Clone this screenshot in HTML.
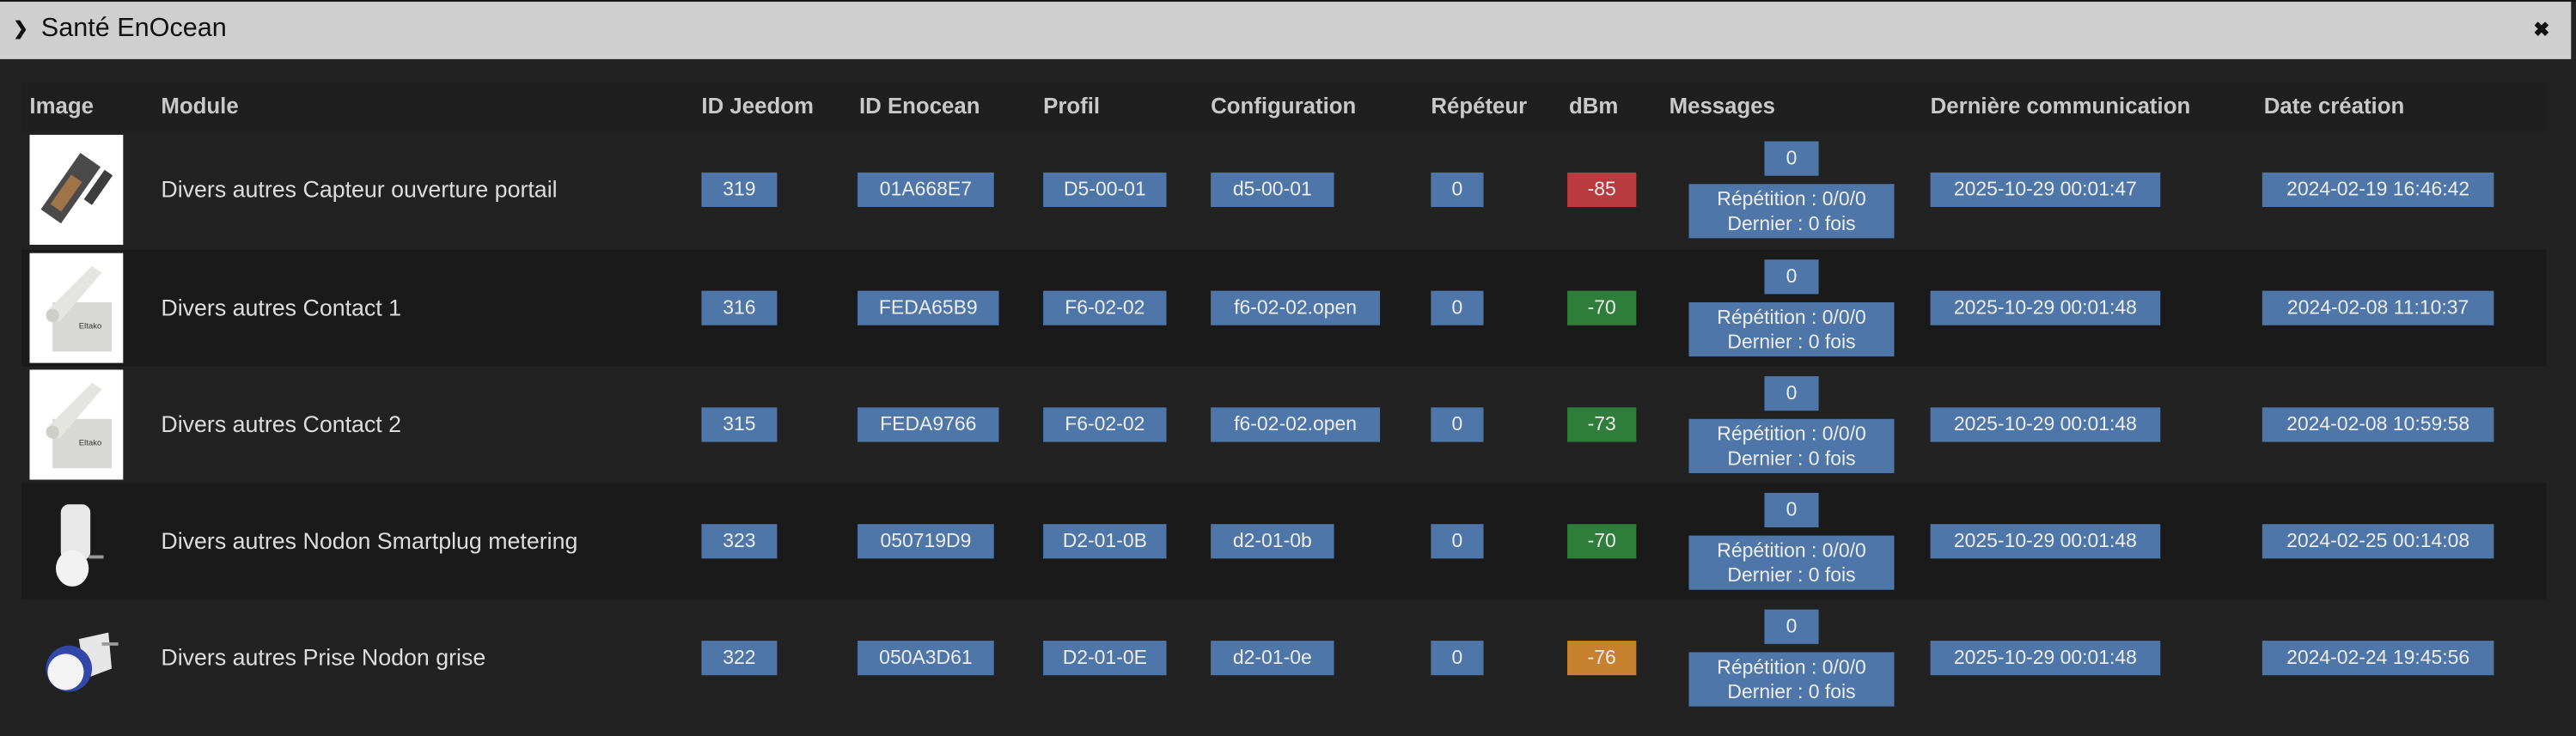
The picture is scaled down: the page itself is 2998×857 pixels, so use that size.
<!DOCTYPE html>
<html><head><meta charset="utf-8"><style>
html,body{margin:0;padding:0;background:#222;overflow:hidden;width:2998px;height:857px}
#w{position:absolute;left:0;top:0;width:1568px;height:448px;transform:scale(1.91199,1.91295);transform-origin:0 0;background:#222;font-family:"Liberation Sans",Arial,sans-serif}
#top{position:absolute;left:0;top:0;width:1568px;height:1px;background:#111}
#hdr{position:absolute;left:0;top:1px;width:1565px;height:35px;background:#cfcfcf;color:#111}
#hdr .t{position:absolute;left:25px;top:8px;font-size:16px}
#hdr .c{position:absolute;left:8px;top:10px;font-size:11px;font-weight:bold}
#hdr .x{position:absolute;left:1542px;top:10px;font-size:12px;font-weight:bold}
#th{position:absolute;left:13px;top:50px;width:1537px;height:30px;background:#1f1f1f}
.h{position:absolute;top:57px;font-size:13.5px;font-weight:bold;color:#c9c9c9;white-space:nowrap}
.row{position:absolute;left:13px;width:1537px;height:71px}
.d{background:#1a1a1a}
.b{position:absolute;top:25px;height:21px;line-height:21px;background:#4e76a8;color:#eee;font-size:12px;text-align:center;white-space:nowrap}
.m{position:absolute;left:85px;top:27px;font-size:14px;color:#ddd;white-space:nowrap}
.img{position:absolute;left:5px;top:2px;width:57px;height:67px}
.r{background:#b83b3f}.g{background:#2f7d3a}.o{background:#c7812f}
.z{position:absolute;left:1061px;top:6px;width:33px;height:21px;line-height:21px;background:#4e76a8;color:#eee;font-size:12px;text-align:center}
.rp{position:absolute;left:1015px;top:32px;width:125px;height:33px;background:#4e76a8;color:#eee;font-size:12px;text-align:center;line-height:15px;padding-top:2px;box-sizing:border-box}
</style></head><body><div id="w">
<div id="top"></div>
<div id="hdr"><span class="c">&#x276F;</span><span class="t">Santé EnOcean</span><span class="x">&#x2716;</span></div>
<div id="th"></div>
<div class="h" style="left:18px">Image</div>
<div class="h" style="left:98px">Module</div>
<div class="h" style="left:427px">ID Jeedom</div>
<div class="h" style="left:523px">ID Enocean</div>
<div class="h" style="left:635px">Profil</div>
<div class="h" style="left:737px">Configuration</div>
<div class="h" style="left:871px">Répéteur</div>
<div class="h" style="left:955px">dBm</div>
<div class="h" style="left:1016px">Messages</div>
<div class="h" style="left:1175px">Dernière communication</div>
<div class="h" style="left:1378px">Date création</div>

<div class="row" style="top:80px">
<svg class="img" viewBox="0 0 57 67"><rect width="57" height="67" fill="#fff"/><g transform="rotate(-55 26 32)"><rect x="4" y="24" width="42" height="15" fill="#4a4a4a"/><rect x="10" y="27" width="22" height="8" fill="#a0744a"/><rect x="24" y="42" width="22" height="6" fill="#3d3d3d"/></g></svg>
<div class="m">Divers autres Capteur ouverture portail</div>
<div class="b" style="left:414px;width:46px">319</div>
<div class="b" style="left:509px;width:83px">01A668E7</div>
<div class="b" style="left:622px;width:75px">D5-00-01</div>
<div class="b" style="left:724px;width:75px">d5-00-01</div>
<div class="b" style="left:858px;width:32px">0</div>
<div class="b r" style="left:941px;width:42px">-85</div>
<div class="z">0</div><div class="rp">Répétition : 0/0/0<br>Dernier : 0 fois</div>
<div class="b" style="left:1162px;width:140px">2025-10-29 00:01:47</div>
<div class="b" style="left:1364px;width:141px">2024-02-19 16:46:42</div>
</div>

<div class="row d" style="top:152px">
<svg class="img" viewBox="0 0 57 67"><rect width="57" height="67" fill="#fff"/><rect x="14" y="30" width="36" height="30" fill="#d8d8d4"/><polygon points="10,36 38,8 44,12 18,42" fill="#e4e4e0"/><circle cx="14" cy="38" r="4" fill="#cfcfc8"/><text x="30" y="46" font-size="5" fill="#333">Eltako</text></svg>
<div class="m">Divers autres Contact 1</div>
<div class="b" style="left:414px;width:46px">316</div>
<div class="b" style="left:509px;width:86px">FEDA65B9</div>
<div class="b" style="left:622px;width:75px">F6-02-02</div>
<div class="b" style="left:724px;width:103px">f6-02-02.open</div>
<div class="b" style="left:858px;width:32px">0</div>
<div class="b g" style="left:941px;width:42px">-70</div>
<div class="z">0</div><div class="rp">Répétition : 0/0/0<br>Dernier : 0 fois</div>
<div class="b" style="left:1162px;width:140px">2025-10-29 00:01:48</div>
<div class="b" style="left:1364px;width:141px">2024-02-08 11:10:37</div>
</div>

<div class="row" style="top:223px">
<svg class="img" viewBox="0 0 57 67"><rect width="57" height="67" fill="#fff"/><rect x="14" y="30" width="36" height="30" fill="#d8d8d4"/><polygon points="10,36 38,8 44,12 18,42" fill="#e4e4e0"/><circle cx="14" cy="38" r="4" fill="#cfcfc8"/><text x="30" y="46" font-size="5" fill="#333">Eltako</text></svg>
<div class="m">Divers autres Contact 2</div>
<div class="b" style="left:414px;width:46px">315</div>
<div class="b" style="left:509px;width:86px">FEDA9766</div>
<div class="b" style="left:622px;width:75px">F6-02-02</div>
<div class="b" style="left:724px;width:103px">f6-02-02.open</div>
<div class="b" style="left:858px;width:32px">0</div>
<div class="b g" style="left:941px;width:42px">-73</div>
<div class="z">0</div><div class="rp">Répétition : 0/0/0<br>Dernier : 0 fois</div>
<div class="b" style="left:1162px;width:140px">2025-10-29 00:01:48</div>
<div class="b" style="left:1364px;width:141px">2024-02-08 10:59:58</div>
</div>

<div class="row d" style="top:294px">
<svg class="img" viewBox="0 0 57 67"><rect x="19" y="11" width="18" height="34" rx="5" fill="#e8e8e8"/><ellipse cx="26" cy="50" rx="10" ry="11" fill="#f2f2f2"/><rect x="36" y="42" width="9" height="2" fill="#999"/></svg>
<div class="m">Divers autres Nodon Smartplug metering</div>
<div class="b" style="left:414px;width:46px">323</div>
<div class="b" style="left:509px;width:83px">050719D9</div>
<div class="b" style="left:622px;width:75px">D2-01-0B</div>
<div class="b" style="left:724px;width:75px">d2-01-0b</div>
<div class="b" style="left:858px;width:32px">0</div>
<div class="b g" style="left:941px;width:42px">-70</div>
<div class="z">0</div><div class="rp">Répétition : 0/0/0<br>Dernier : 0 fois</div>
<div class="b" style="left:1162px;width:140px">2025-10-29 00:01:48</div>
<div class="b" style="left:1364px;width:141px">2024-02-25 00:14:08</div>
</div>

<div class="row" style="top:365px">
<svg class="img" viewBox="0 0 57 67"><polygon points="30,22 48,18 50,40 34,46" fill="#e6e6e6"/><rect x="44" y="24" width="10" height="2" fill="#999"/><circle cx="24" cy="40" r="14" fill="#3347a8"/><circle cx="22" cy="42" r="11" fill="#f4f4f4"/></svg>
<div class="m">Divers autres Prise Nodon grise</div>
<div class="b" style="left:414px;width:46px">322</div>
<div class="b" style="left:509px;width:83px">050A3D61</div>
<div class="b" style="left:622px;width:75px">D2-01-0E</div>
<div class="b" style="left:724px;width:75px">d2-01-0e</div>
<div class="b" style="left:858px;width:32px">0</div>
<div class="b o" style="left:941px;width:42px">-76</div>
<div class="z">0</div><div class="rp">Répétition : 0/0/0<br>Dernier : 0 fois</div>
<div class="b" style="left:1162px;width:140px">2025-10-29 00:01:48</div>
<div class="b" style="left:1364px;width:141px">2024-02-24 19:45:56</div>
</div>
</div></body></html>
